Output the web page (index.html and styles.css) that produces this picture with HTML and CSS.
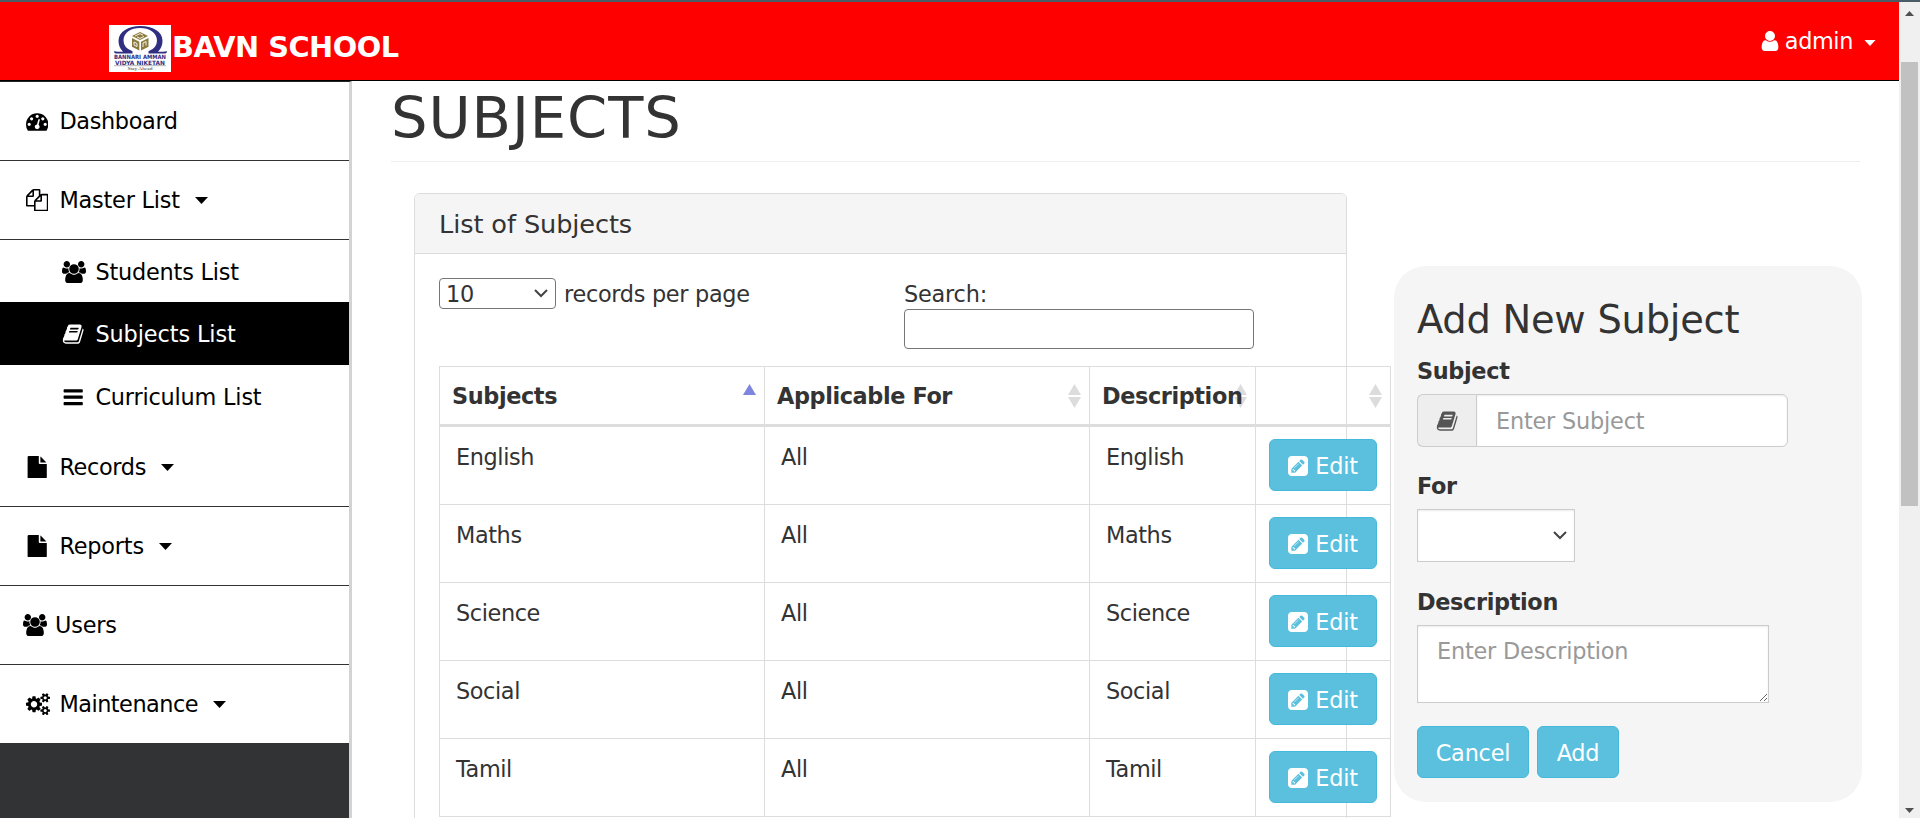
FILE: index.html
```html
<!DOCTYPE html>
<html lang="en">
<head>
<meta charset="utf-8">
<title>BAVN School - Subjects</title>
<link rel="stylesheet" href="styles.css">
</head>
<body>
<svg class="sprite" aria-hidden="true">
  <symbol id="i-dash" viewBox="0 0 1792 1792"><path d="M384 1152q0-53-37.5-90.5t-90.5-37.5-90.5 37.5-37.5 90.5 37.5 90.5 90.5 37.5 90.5-37.5 37.5-90.5zm192-448q0-53-37.5-90.5t-90.5-37.5-90.5 37.5-37.5 90.5 37.5 90.5 90.5 37.5 90.5-37.5 37.5-90.5zm428 481l101-382q6-26-7.5-48.5t-38.5-29.5-48 6.5-30 39.5l-101 382q-60 5-107 43.5t-63 98.5q-20 77 20 146t117 89 146-20 89-117q16-60-6-117t-72-91zm660-33q0-53-37.5-90.5t-90.5-37.5-90.5 37.5-37.5 90.5 37.5 90.5 90.5 37.5 90.5-37.5 37.5-90.5zm-640-640q0-53-37.5-90.5t-90.5-37.5-90.5 37.5-37.5 90.5 37.5 90.5 90.5 37.5 90.5-37.5 37.5-90.5zm448 192q0-53-37.5-90.5t-90.5-37.5-90.5 37.5-37.5 90.5 37.5 90.5 90.5 37.5 90.5-37.5 37.5-90.5zm320 448q0 261-141 483-19 29-54 29h-1402q-35 0-54-29-141-221-141-483 0-182 71-348t191-286 286-191 348-71 348 71 286 191 191 286 71 348z"/></symbol>
  <symbol id="i-copy" viewBox="0 0 1792 1792"><path d="M1696 384q40 0 68 28t28 68v1216q0 40-28 68t-68 28h-960q-40 0-68-28t-28-68v-288h-544q-40 0-68-28t-28-68v-672q0-40 20-88t48-76l408-408q28-28 76-48t88-20h416q40 0 68 28t28 68v328q68-40 128-40h416zm-544 213l-299 299h299v-299zm-640-384l-299 299h299v-299zm196 647l316-316v-416h-384v416q0 40-28 68t-68 28h-416v640h512v-256q0-40 20-88t48-76zm956 804v-1152h-384v416q0 40-28 68t-68 28h-416v640h896z"/></symbol>
  <symbol id="i-group" viewBox="-64 0 1920 1792"><path d="M529 896q-162 5-265 128h-134q-82 0-138-40.500t-56-118.500q0-353 124-353 6 0 43.500 21t97.500 42.500 119 21.500q67 0 133-23-5 37-5 66 0 139 81 256zm1071 637q0 120-73 189.500t-194 69.500h-874q-121 0-194-69.500t-73-189.500q0-53 3.500-103.500t14-109 26.500-108.500 43-97.500 62-81 85.500-53.500 111.500-20q10 0 43 21.500t73 48 107 48 135 21.500 135-21.500 107-48 73-48 43-21.500q61 0 111.500 20t85.500 53.500 62 81 43 97.500 26.500 108.500 14 109 3.500 103.500zm-1024-1277q0 106-75 181t-181 75-181-75-75-181 75-181 181-75 181 75 75 181zm704 384q0 159-112.500 271.500t-271.500 112.500-271.500-112.500-112.500-271.500 112.500-271.500 271.500-112.500 271.500 112.500 112.500 271.500zm576 225q0 78-56 118.500t-138 40.500h-134q-103-123-265-128 81-117 81-256 0-29-5-66 66 23 133 23 59 0 119-21.500t97.500-42.500 43.500-21q124 0 124 353zm-128-609q0 106-75 181t-181 75-181-75-75-181 75-181 181-75 181 75 75 181z"/></symbol>
  <symbol id="i-book" viewBox="0 0 1792 1792"><path d="M1703 478q40 57 18 129l-275 906q-19 64-76.500 107.500t-122.500 43.500h-923q-77 0-148.500-53.500t-99.500-131.500q-24-67-2-127 0-4 3-27t4-37q1-8-3-21.500t-3-19.500q2-11 8-21t16.500-23.500 16.500-23.500q23-38 45-91.500t30-91.500q3-10 .5-30t-.5-28q3-11 17-28t17-23q21-36 42-92t25-90q1-9-2.500-32t.5-28q4-13 22-30.500t22-22.500q19-26 42.500-84.500t27.500-96.500q1-8-3-25.500t-2-26.500q2-8 9-18t18-23 17-21q8-12 16.500-30.500t15-35 16-36 19.500-32 26.500-23.500 36-11.500 47.500 5.500l-1 3q38-9 51-9h761q74 0 114 56t18 130l-274 906q-36 119-71.500 153.500t-128.500 34.500h-869q-27 0-38 15-11 16-1 43 24 70 144 70h923q29 0 56-15.500t35-41.500l300-987q7-22 5-57 38 15 59 43zm-1064 2q-4 13 2 22.500t20 9.500h608q13 0 25.500-9.500t16.500-22.500l21-64q4-13-2-22.500t-20-9.500h-608q-13 0-25.500 9.500t-16.500 22.500zm-83 256q-4 13 2 22.500t20 9.500h608q13 0 25.500-9.500t16.500-22.500l21-64q4-13-2-22.500t-20-9.500h-608q-13 0-25.500 9.500t-16.500 22.500z"/></symbol>
  <symbol id="i-bars" viewBox="0 0 1792 1792"><path d="M1664 1344v128q0 26-19 45t-45 19h-1408q-26 0-45-19t-19-45v-128q0-26 19-45t45-19h1408q26 0 45 19t19 45zm0-512v128q0 26-19 45t-45 19h-1408q-26 0-45-19t-19-45v-128q0-26 19-45t45-19h1408q26 0 45 19t19 45zm0-512v128q0 26-19 45t-45 19h-1408q-26 0-45-19t-19-45v-128q0-26 19-45t45-19h1408q26 0 45 19t19 45z"/></symbol>
  <symbol id="i-file" viewBox="0 0 1792 1792"><path d="M1152 512v-472q22 14 36 28l408 408q14 14 28 36h-472zm-128 32q0 40 28 68t68 28h544v1056q0 40-28 68t-68 28h-1344q-40 0-68-28t-28-68v-1600q0-40 28-68t68-28h800v544z"/></symbol>
  <symbol id="i-cogs" viewBox="0 0 1920 1792"><path d="M896 896q0-106-75-181t-181-75-181 75-75 181 75 181 181 75 181-75 75-181zm768 512q0-52-38-90t-90-38-90 38-38 90q0 53 37.500 90.500t90.500 37.500 90.500-37.500 37.500-90.500zm0-1024q0-52-38-90t-90-38-90 38-38 90q0 53 37.500 90.500t90.500 37.500 90.500-37.500 37.500-90.500zm-384 421v185q0 10-7 19.500t-16 10.500l-155 24q-11 35-32 76 34 48 90 115 7 11 7 20 0 12-7 19-23 30-82.500 89.500t-78.500 59.500q-11 0-21-7l-115-90q-37 19-77 31-11 108-23 155-7 24-30 24h-186q-11 0-20-7.500t-10-17.500l-23-153q-34-10-75-31l-118 89q-7 7-20 7-11 0-21-8-144-133-144-160 0-9 7-19 10-14 41-53t47-61q-23-44-35-82l-152-24q-10-1-17-9.500t-7-19.500v-185q0-10 7-19.500t16-10.500l155-24q11-35 32-76-34-48-90-115-7-11-7-20 0-12 7-20 22-30 82-89t79-59q11 0 21 7l115 90q34-18 77-32 11-108 23-154 7-24 30-24h186q11 0 20 7.500t10 17.500l23 153q34 10 75 31l118-89q8-7 20-7 11 0 21 8 144 133 144 160 0 8-7 19-12 16-42 54t-45 60q23 48 34 82l152 23q10 2 17 10.500t7 19.500zm640 533v140q0 16-149 31-12 27-30 52 51 113 51 138 0 4-4 7-122 71-124 71-8 0-46-47t-52-68q-20 2-30 2t-30-2q-14 21-52 68t-46 47q-2 0-124-71-4-3-4-7 0-25 51-138-18-25-30-52-149-15-149-31v-140q0-16 149-31 13-29 30-52-51-113-51-138 0-4 4-7 4-2 35-20t59-34 30-16q8 0 46 46.500t52 67.500q20-2 30-2t30 2q51-71 92-112l6-2q4 0 124 70 4 3 4 7 0 25-51 138 17 23 30 52 149 15 149 31zm0-1024v140q0 16-149 31-12 27-30 52 51 113 51 138 0 4-4 7-122 71-124 71-8 0-46-47t-52-68q-20 2-30 2t-30-2q-14 21-52 68t-46 47q-2 0-124-71-4-3-4-7 0-25 51-138-18-25-30-52-149-15-149-31v-140q0-16 149-31 13-29 30-52-51-113-51-138 0-4 4-7 4-2 35-20t59-34 30-16q8 0 46 46.500t52 67.500q20-2 30-2t30 2q51-71 92-112l6-2q4 0 124 70 4 3 4 7 0 25-51 138 17 23 30 52 149 15 149 31z"/></symbol>
  <symbol id="i-user" viewBox="256 128 1280 1536"><path d="M1536 1399q0 109-62.500 187t-150.500 78h-854q-88 0-150.500-78t-62.500-187q0-85 8.500-160.500t31.500-152 58.500-131 94-89 134.500-34.500q131 128 313 128t313-128q76 0 134.500 34.500t94 89 58.500 131 31.500 152 8.500 160.500zm-256-887q0 159-112.500 271.500t-271.500 112.500-271.500-112.500-112.500-271.500 112.500-271.500 271.500-112.500 271.500 112.500 112.500 271.500z"/></symbol>
  <symbol id="i-edit" viewBox="0 0 1536 1536"><path d="M404 980l152 152-52 52h-56v-96h-96v-56zm414-390q14 13-3 30l-291 291q-17 17-30 3-14-13 3-30l291-291q17-17 30-3zm-274 690l544-544-288-288-544 544v288h288zm608-608l92-92q28-28 28-68t-28-68l-152-152q-28-28-68-28t-68 28l-92 92zm384-384v960q0 119-84.500 203.500t-203.500 84.500h-960q-119 0-203.500-84.500t-84.500-203.500v-960q0-119 84.500-203.500t203.500-84.500h960q119 0 203.500 84.500t84.500 203.500z"/></symbol>
  <symbol id="i-caret" viewBox="0 0 13 7"><path d="M0 0h13L6.500 7z"/></symbol>
  <symbol id="i-chev" viewBox="0 0 14 9"><path d="M1 1l6 6 6-6" fill="none" stroke="#444" stroke-width="2"/></symbol>
  <symbol id="i-sort" viewBox="0 0 13 24"><path d="M0 11L6.500 0 13 11zM0 13h13L6.500 24z"/></symbol>
  <symbol id="i-asc" viewBox="0 0 13 24"><path d="M0 11L6.500 0 13 11z"/></symbol>
</svg>

<div class="window">
  <div class="page">
    <header class="topbar">
      <div class="brand">
        <svg class="logo" viewBox="0 0 62 47">
          <rect width="62" height="47" fill="#fff"/>
          <path d="M5 26q0 2.500 2 2.500h16.500v-2.200Q14.500 23 14.500 15.500C14.500 7.500 22 3 31 3s17 4.500 17 12.500q0 7.500-8.500 10.800v2.200H56q2 0 2-2.500-2 1-5 .8h-4q4.500-4.500 4.500-11C53.500 6.500 43.500 1 31.500 1S9.500 6.500 9.500 15.800q0 6.500 4.500 11h-4q-3 .2-5-.8z" fill="#312e81"/>
          <path d="M31 7l8 4-8 4-8-4zM23 13l7.300 3.700v8.800L23 21.800zM39.500 13l-7.500 3.700v8.800l7.500-3.700z" fill="#8b7a3c"/>
          <path d="M26 11l5-2.300 3 1.500M28 12l3 1.400 4-2M25 17l3 1.500v3L25 20zM34 22v-4l3-1.500v4" fill="none" stroke="#fff" stroke-width=".9"/>
          <text class="logo-name" x="31" y="34.300" textLength="52" lengthAdjust="spacingAndGlyphs">BANNARI AMMAN</text>
          <text class="logo-name" x="31" y="40" textLength="50" lengthAdjust="spacingAndGlyphs">VIDYA NIKETAN</text>
          <path d="M5 40.700h52" stroke="#666" stroke-width=".5"/>
          <text class="logo-tag" x="31" y="45" textLength="25" lengthAdjust="spacingAndGlyphs">Stay Ahead</text>
        </svg>
        <span class="brand-name">BAVN SCHOOL</span>
      </div>
      <div class="account">
        <svg class="user-icon"><use href="#i-user"/></svg>
        <span class="account-name">admin</span>
        <svg class="caret"><use href="#i-caret"/></svg>
      </div>
    </header>

    <div class="columns">
      <nav class="sidebar">
        <a class="item snug"><svg class="icon"><use href="#i-dash"/></svg><span>Dashboard</span></a>
        <a class="item"><svg class="icon"><use href="#i-copy"/></svg><span>Master List</span><svg class="caret"><use href="#i-caret"/></svg></a>
        <a class="sub first"><svg class="icon wide"><use href="#i-group"/></svg><span>Students List</span></a>
        <a class="sub active"><svg class="icon"><use href="#i-book"/></svg><span>Subjects List</span></a>
        <a class="sub"><svg class="icon"><use href="#i-bars"/></svg><span>Curriculum List</span></a>
        <a class="item snug"><svg class="icon"><use href="#i-file"/></svg><span>Records</span><svg class="caret"><use href="#i-caret"/></svg></a>
        <a class="item"><svg class="icon"><use href="#i-file"/></svg><span>Reports</span><svg class="caret"><use href="#i-caret"/></svg></a>
        <a class="item users"><svg class="icon wide"><use href="#i-group"/></svg><span>Users</span></a>
        <a class="item last"><svg class="icon wide"><use href="#i-cogs"/></svg><span>Maintenance</span><svg class="caret"><use href="#i-caret"/></svg></a>
      </nav>

      <main class="content">
        <h1 class="title">SUBJECTS</h1>
        <div class="split">
          <section class="panel">
            <div class="panel-head">List of Subjects</div>
            <div class="panel-body">
              <div class="controls">
                <div class="length"><span class="length-select"><span>10</span><svg class="chev"><use href="#i-chev"/></svg></span><span class="length-label">records per page</span></div>
                <label class="search"><span>Search:</span><input class="search-input" type="text"></label>
              </div>
              <table class="grid">
                <colgroup><col class="c1"><col class="c2"><col class="c3"><col class="c4"></colgroup>
                <thead><tr>
                  <th>Subjects<svg class="sort asc"><use href="#i-asc"/></svg></th>
                  <th>Applicable For<svg class="sort"><use href="#i-sort"/></svg></th>
                  <th>Description<svg class="sort"><use href="#i-sort"/></svg></th>
                  <th><svg class="sort"><use href="#i-sort"/></svg></th>
                </tr></thead>
                <tbody>
                  <tr><td>English</td><td>All</td><td>English</td><td class="act"><a class="btn"><svg class="edit"><use href="#i-edit"/></svg>Edit</a></td></tr>
                  <tr><td>Maths</td><td>All</td><td>Maths</td><td class="act"><a class="btn"><svg class="edit"><use href="#i-edit"/></svg>Edit</a></td></tr>
                  <tr><td>Science</td><td>All</td><td>Science</td><td class="act"><a class="btn"><svg class="edit"><use href="#i-edit"/></svg>Edit</a></td></tr>
                  <tr><td>Social</td><td>All</td><td>Social</td><td class="act"><a class="btn"><svg class="edit"><use href="#i-edit"/></svg>Edit</a></td></tr>
                  <tr><td>Tamil</td><td>All</td><td>Tamil</td><td class="act"><a class="btn"><svg class="edit"><use href="#i-edit"/></svg>Edit</a></td></tr>
                </tbody>
              </table>
            </div>
          </section>

          <form class="card">
            <h2 class="card-title">Add New Subject</h2>
            <label class="label">Subject</label>
            <div class="group">
              <span class="addon"><svg class="icon"><use href="#i-book"/></svg></span>
              <input class="field" type="text" placeholder="Enter Subject">
            </div>
            <label class="label">For</label>
            <div class="select"><svg class="chev"><use href="#i-chev"/></svg></div>
            <label class="label">Description</label>
            <textarea class="area" placeholder="Enter Description"></textarea>
            <div class="actions"><a class="btn cancel">Cancel</a><a class="btn add">Add</a></div>
          </form>
        </div>
      </main>
    </div>
  </div>

  <div class="scrollbar">
    <svg class="arrow" viewBox="0 0 9 5"><path d="M0 5h9L4.500 0z"/></svg>
    <div class="thumb"></div>
    <svg class="arrow down" viewBox="0 0 9 5"><path d="M0 0h9L4.500 5z"/></svg>
  </div>
</div>
</body>
</html>
```
FILE: styles.css
```css
* { box-sizing: border-box; }
html, body { margin: 0; height: 818px; overflow: hidden; }
body {
  background: #fff;
  color: #333;
  font: 22.4px/32px Verdana, "DejaVu Sans", sans-serif;
  letter-spacing: -0.2px;
}
svg { display: block; flex: none; fill: currentColor; }
.sprite { position: absolute; width: 0; height: 0; }
.window { display: flex; height: 818px; border-top: 2px solid #4a5c66; }
.page { width: 1899px; flex: none; display: flex; flex-direction: column; overflow: hidden; }

/* Top bar */
.topbar {
  height: 79px; flex: none; display: flex; justify-content: space-between; align-items: flex-start;
  background: #f00; border-bottom: 1px solid #000; color: #fff;
}
.brand { display: flex; padding: 23px 0 0 109px; }
.logo { width: 62px; height: 47px; }
.logo-name { font: bold 5.8px "DejaVu Sans", sans-serif; letter-spacing: 0; text-anchor: middle; fill: #312e81; }
.logo-tag { font: 5px "Liberation Serif", serif; letter-spacing: 0; text-anchor: middle; fill: #333; }
.brand-name { margin-left: 1px; font-size: 28.8px; font-weight: bold; line-height: 44px; letter-spacing: -0.5px; }
.account { display: flex; padding: 23px 23px 0 0; }
.user-icon { width: 18px; height: 20px; margin: 6px 6px 0 0; }
.account-name { margin-right: 11px; letter-spacing: -0.4px; }
.account .caret { width: 12px; height: 6px; margin: 15px 0 0; }

/* Sidebar */
.columns { display: flex; flex: 1; min-height: 0; }
.sidebar { width: 352px; flex: none; background: #323335; border-right: 3px solid #d3d3d3; border-top: 1px solid #222; color: #000; }
.item, .sub { display: flex; background: #fff; }
.item { height: 79px; padding: 23px 0 0 26px; border-bottom: 1px solid #323335; }
.item.snug { letter-spacing: -0.35px; }
.item.last { border-bottom: 0; height: 78px; letter-spacing: -0.5px; }
.item.users { padding-left: 23px; }
.icon { width: 22.4px; height: 22.4px; margin: 5px 11px 0 0; }
.icon.wide { width: 24px; margin-right: 9.400px; }
.users .icon.wide { margin-right: 8px; }
.sidebar .caret { width: 13px; height: 7px; margin: 13px 0 0 15px; }
.sub { height: 63px; padding: 16px 0 0 62px; }
.sub.first { height: 62px; }
.sub.active { background: #000; color: #fff; letter-spacing: -0.1px; }

/* Content */
.content { flex: none; width: 1509px; padding: 0 0 0 39px; }
.title { margin: 0; width: 1469px; height: 81px; padding-top: 6px; border-bottom: 1px solid #eee; font-size: 57.600px; font-weight: normal; line-height: 63px; letter-spacing: 0.9px; }
.split { display: flex; align-items: flex-start; padding: 31px 0 0 23px; }
.panel { width: 933px; height: 700px; flex: none; border: 1px solid #ddd; border-radius: 6px; }
.panel-head { height: 60px; padding: 14px 24px 0; background: #f5f5f5; border-bottom: 1px solid #ddd; border-radius: 5px 5px 0 0; font-size: 25.600px; line-height: 32px; letter-spacing: -0.1px; }
.panel-body { padding: 24px; }
.controls { display: flex; height: 88px; }
.length { width: 465px; display: flex; align-items: flex-start; }
.length-select { display: flex; justify-content: space-between; width: 117px; height: 31px; border: 1px solid #767676; border-radius: 4px; padding: 0 7px 0 6px; line-height: 31px; }
.length-select .chev { margin-top: 10px; }
.length-label { margin-left: 8px; letter-spacing: -0.3px; }
.chev { width: 14px; height: 9px; }
.search { display: flex; flex-direction: column; }
.search > span { height: 31px; }
.search-input { width: 350px; height: 40px; margin: 0; border: 1px solid #767676; border-radius: 4px; }

.grid { width: 951px; table-layout: fixed; border-collapse: collapse; }
.c1, .c2 { width: 325px; }
.c3 { width: 166px; }
.c4 { width: 135px; }
.grid th { position: relative; height: 59px; padding: 13px 0 10px 12px; border: 1px solid #ddd; border-bottom: 3px solid #ddd; text-align: left; vertical-align: top; font-weight: bold; letter-spacing: -0.4px; }
.grid td { height: 78px; padding: 14px 0 0 16px; border: 1px solid #ddd; vertical-align: top; letter-spacing: -0.4px; }
.grid tbody tr:first-child td { height: 79px; }
.grid td.act { padding-left: 13px; padding-top: 12px; }
.sort { position: absolute; z-index: -1; right: 8px; top: 17px; width: 13px; height: 24px; color: #dcdcdc; }
.sort.asc { color: #7f85df; }
.btn { display: flex; align-items: center; justify-content: center; width: 108px; height: 52px; padding-top: 1px; background: #5bc0de; border: 1px solid #46b8da; border-radius: 6px; color: #fff; letter-spacing: -0.2px; }
.edit { width: 20px; height: 20px; margin-right: 7px; }

/* Form */
.card { width: 468px; height: 536px; flex: none; margin: 73px 0 0 47px; padding: 33px 23px 0; background: #f5f5f5; border-radius: 32px; }
.card-title { margin: 0 0 14px; font-size: 38.400px; font-weight: normal; line-height: 42px; letter-spacing: -0.25px; }
.label { display: block; height: 39px; font-weight: bold; letter-spacing: -0.35px; }
.group { display: flex; width: 371px; height: 53px; margin-bottom: 23px; }
.addon { width: 59px; background: #eee; border: 1px solid #ccc; border-right: 0; border-radius: 6px 0 0 6px; color: #555; padding: 10px 0 0 18px; }
.field, .area { margin: 0; border: 1px solid #ccc; background: #fff; font: inherit; letter-spacing: inherit; box-shadow: inset 0 1px 2px rgba(0,0,0,.08); outline: 0; }
.field { width: 312px; padding: 0 19px; border-radius: 0 6px 6px 0; }
.field::placeholder, .area::placeholder { color: #999; opacity: 1; }
.select { display: flex; justify-content: flex-end; align-items: center; width: 158px; height: 53px; padding: 0 7px 0 0; margin-bottom: 24px; background: #fff; border: 1px solid #ccc; box-shadow: inset 0 1px 2px rgba(0,0,0,.08); }
.area { display: block; width: 352px; height: 78px; padding: 9px 19px; resize: both; }
.actions { display: flex; gap: 8px; margin-top: 23px; }
.btn.cancel { width: 112px; }
.btn.add { width: 82px; }

/* Window scrollbar */
.scrollbar { display: flex; flex-direction: column; width: 21px; background: #f0f0f0; padding: 9px 0 5px 2px; }
.arrow { width: 9px; height: 5px; margin-left: 4px; color: #505050; }
.thumb { width: 17px; height: 444px; margin-top: 46px; background: #c1c1c1; }
.arrow.down { margin-top: auto; }
```
